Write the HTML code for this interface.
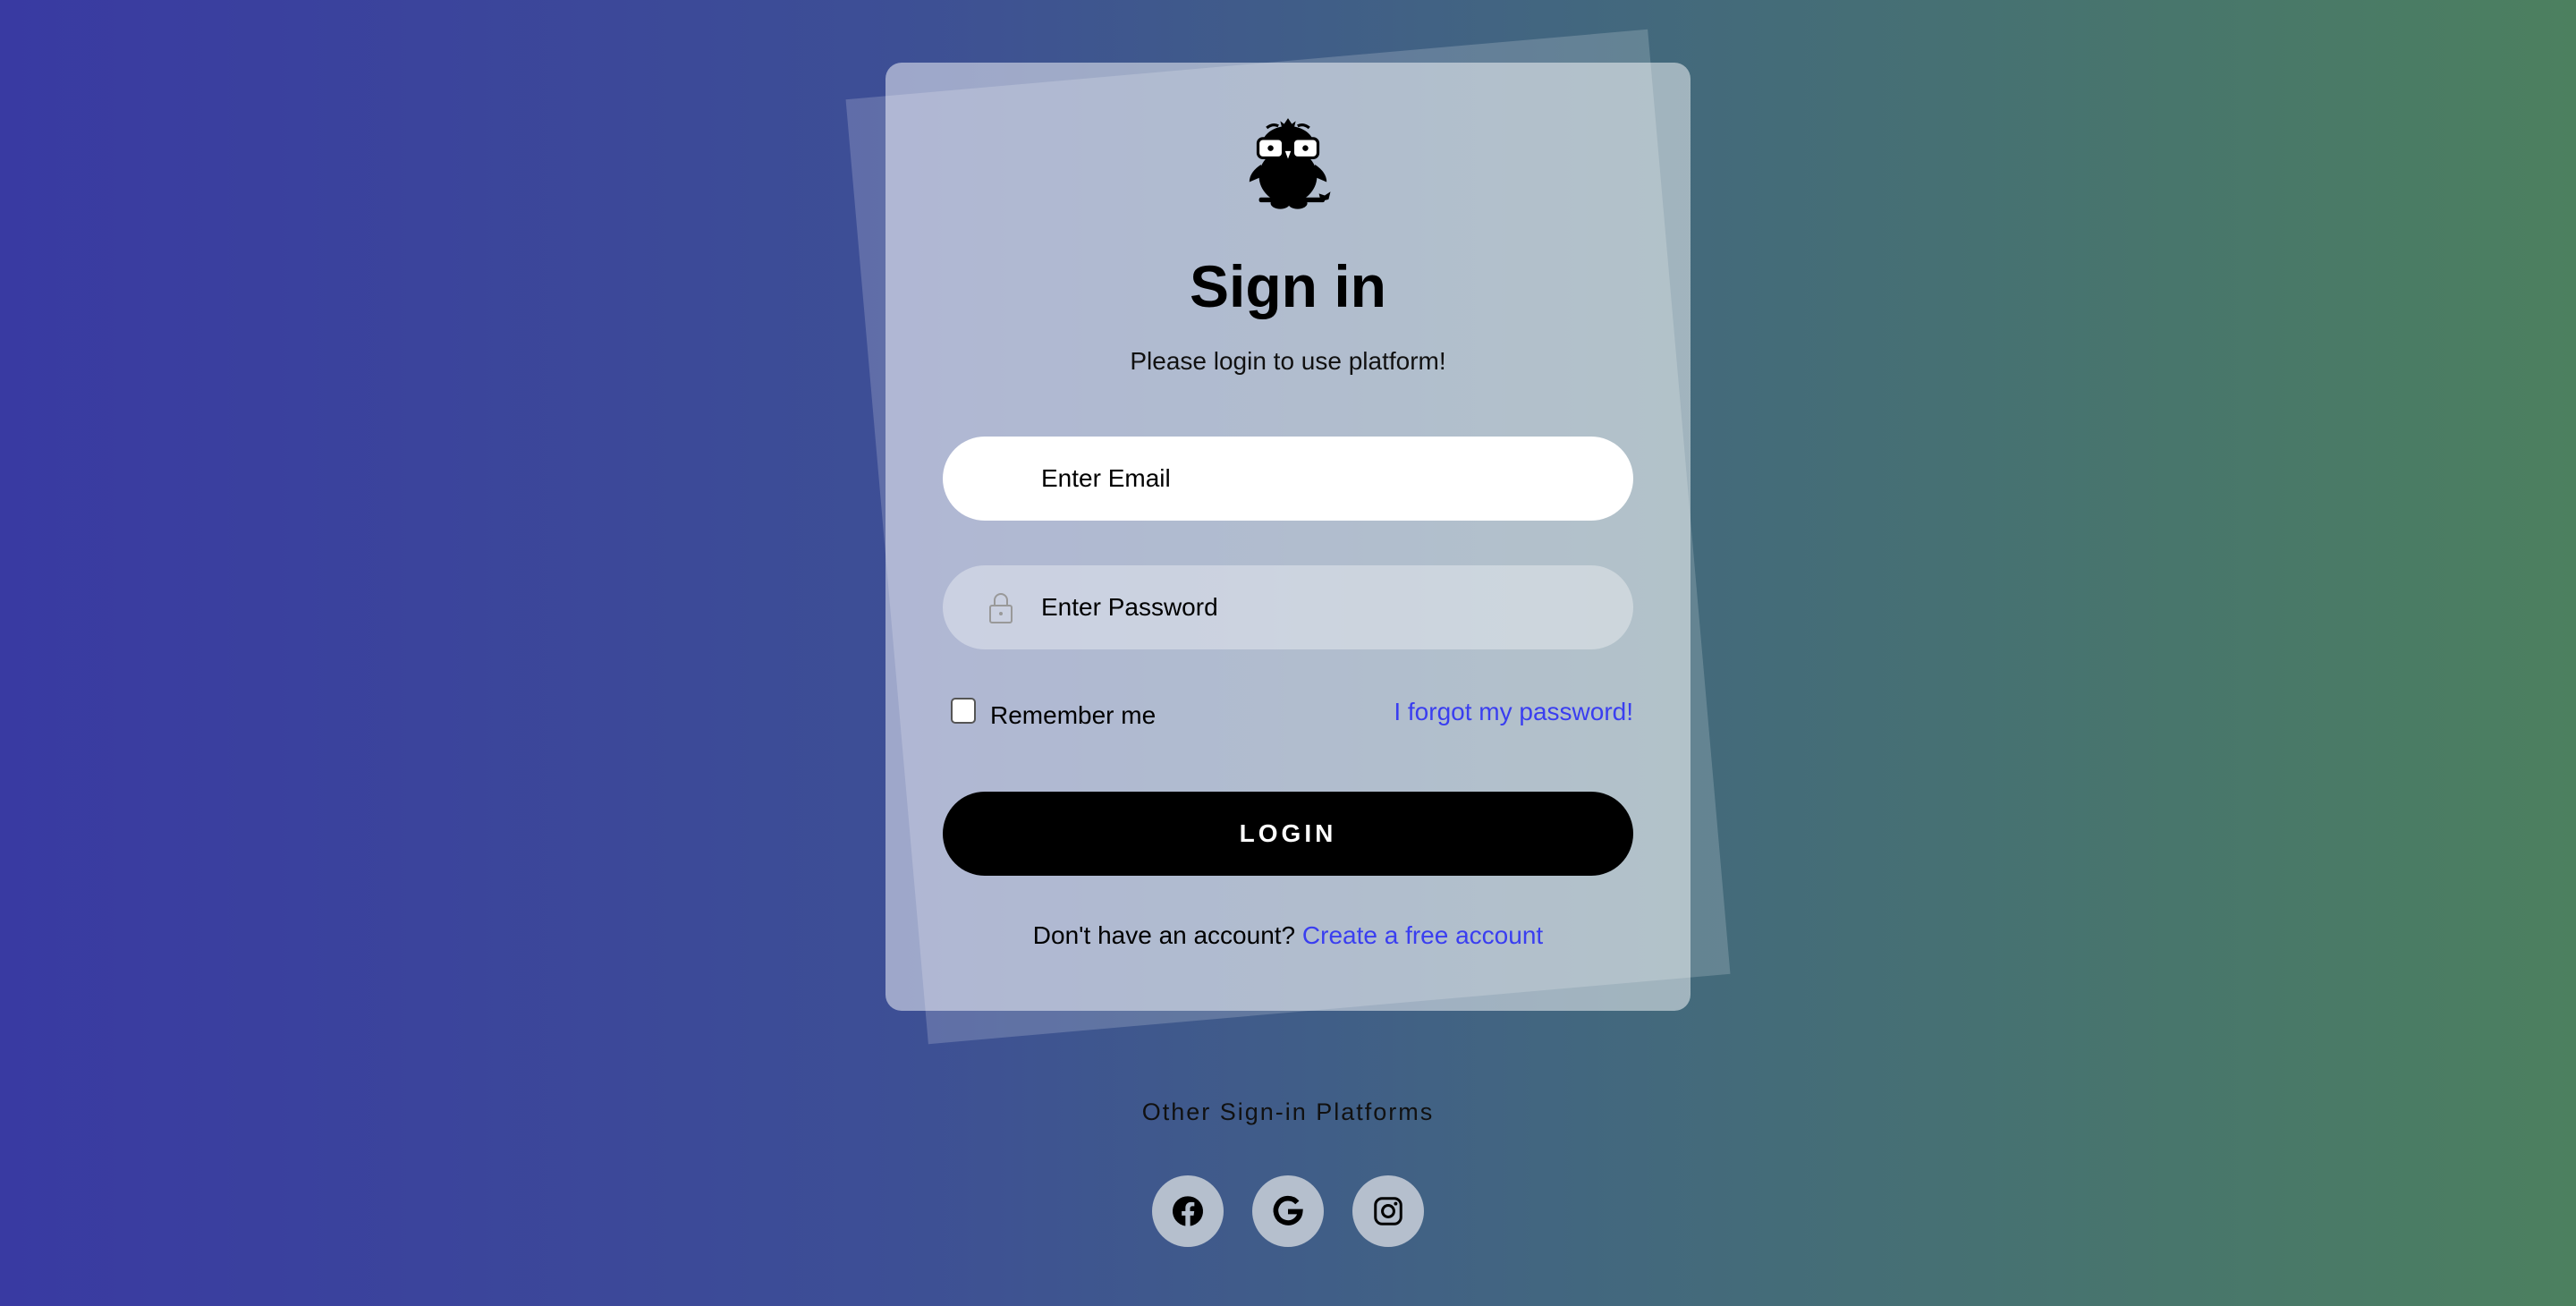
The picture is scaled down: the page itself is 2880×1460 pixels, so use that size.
<!DOCTYPE html>
<html><head><meta charset="utf-8"><style>
*{margin:0;padding:0;box-sizing:border-box}
html,body{width:2880px;height:1460px;overflow:hidden}
body{background:linear-gradient(90deg,#393aa2 0%,#3d4f95 35%,#426680 60%,#4c805f 100%);font-family:"Liberation Sans",sans-serif;position:relative}
.back{position:absolute;left:990px;top:70px;width:900px;height:1060px;background:rgba(255,255,255,0.18);transform:rotate(-5deg)}
.card{position:absolute;left:990px;top:70px;width:900px;height:1060px;background:rgba(255,255,255,0.5);border-radius:18px}
.abs{position:absolute}
.c{left:0;width:900px;text-align:center}
.inp{position:absolute;left:64px;width:772px;height:94px;border-radius:47px;font-size:28px;color:#000;padding-left:110px;line-height:94px}
</style></head><body>
<div class="back"></div>
<div class="card">
 <svg class="abs" style="left:398px;top:60px" width="104" height="108" viewBox="0 0 96 100">
  <g fill="#000">
   <path d="M44 8l4-6 4 6 4-3-2 8h-12l-2-8z"/>
   <path d="M26 12q6-5 12-2" stroke="#000" stroke-width="3" fill="none"/>
   <path d="M70 12q-6-5-12-2" stroke="#000" stroke-width="3" fill="none"/>
   <ellipse cx="48" cy="30" rx="27" ry="20"/>
   <ellipse cx="48" cy="62" rx="30" ry="28"/>
   <path d="M20 50q-12 8-12 18l14-6z"/>
   <path d="M76 50q12 8 12 18l-14-6z"/>
   <rect x="18" y="84" width="68" height="5" rx="2"/>
   <path d="M80 80l6 2 6-4-2 8-8 2z"/>
   <ellipse cx="40" cy="90" rx="10" ry="6"/>
   <ellipse cx="58" cy="90" rx="10" ry="6"/>
  </g>
  <g fill="#fff" stroke="#000" stroke-width="3">
   <rect x="17" y="23" width="26" height="20" rx="5"/>
   <rect x="53" y="23" width="26" height="20" rx="5"/>
  </g>
  <circle cx="30" cy="33" r="3" fill="#000"/><circle cx="66" cy="33" r="3" fill="#000"/>
  <path d="M45 36l3 8 3-8z" fill="#fff"/>
 </svg>
 <div class="abs c" style="top:212px;font-size:66px;font-weight:bold;color:#000">Sign in</div>
 <div class="abs c" style="top:318px;font-size:28px;color:#111">Please login to use platform!</div>
 <div class="inp" style="top:418px;background:#fff">Enter Email</div>
 <div class="inp" style="top:562px;background:rgba(255,255,255,0.35)">Enter Password
  <svg class="abs" style="left:50px;top:30px" width="30" height="36" viewBox="0 0 30 36"><path d="M8 15V9a7 7 0 0 1 14 0v6" fill="none" stroke="#999" stroke-width="2"/><rect x="3" y="15" width="24" height="19" rx="2" fill="none" stroke="#999" stroke-width="2"/><circle cx="15" cy="24" r="2" fill="#999"/></svg>
 </div>
 <div class="abs" style="left:73px;top:710px;width:28px;height:29px;background:#fff;border:2px solid #555;border-radius:5px"></div>
 <div class="abs" style="left:117px;top:714px;font-size:28px;color:#000">Remember me</div>
 <div class="abs" style="right:64px;top:710px;font-size:28px;color:#3a3ef0">I forgot my password!</div>
 <div class="abs" style="left:64px;top:815px;width:772px;height:94px;border-radius:47px;background:#000;color:#fff;font-size:28px;font-weight:bold;letter-spacing:4px;text-align:center;line-height:94px">LOGIN</div>
 <div class="abs c" style="top:960px;font-size:28px;color:#000">Don't have an account? <span style="color:#3a3ef0">Create a free account</span></div>
</div>
<div class="abs" style="left:0;width:2880px;top:1228px;text-align:center;font-size:27px;letter-spacing:2px;color:#111">Other Sign-in Platforms</div>
<div class="abs" style="left:1288px;top:1314px;width:80px;height:80px;border-radius:50%;background:#b5bfcd">
 <svg class="abs" style="left:20px;top:20px" width="40" height="40" viewBox="0 0 24 24"><path d="M12 2a10 10 0 0 0-1.6 19.9v-7H7.9V12h2.5V9.8c0-2.5 1.5-3.9 3.8-3.9 1.1 0 2.2.2 2.2.2v2.5h-1.3c-1.2 0-1.6.8-1.6 1.6V12h2.8l-.4 2.9h-2.3v7A10 10 0 0 0 12 2z"/></svg>
</div>
<div class="abs" style="left:1400px;top:1314px;width:80px;height:80px;border-radius:50%;background:#b5bfcd">
 <svg class="abs" style="left:20px;top:20px" width="40" height="40" viewBox="0 0 24 24"><path d="M18.2 6.2A8.2 8.2 0 1 0 20.2 12.3H12" fill="none" stroke="#000" stroke-width="3.4"/></svg>
</div>
<div class="abs" style="left:1512px;top:1314px;width:80px;height:80px;border-radius:50%;background:#b5bfcd">
 <svg class="abs" style="left:22px;top:22px" width="36" height="36" viewBox="0 0 24 24"><rect x="2.5" y="2.5" width="19" height="19" rx="5" fill="none" stroke="#000" stroke-width="2"/><circle cx="12" cy="12" r="4.3" fill="none" stroke="#000" stroke-width="2"/><circle cx="17.6" cy="6.4" r="1.3"/></svg>
</div>
</body></html>
